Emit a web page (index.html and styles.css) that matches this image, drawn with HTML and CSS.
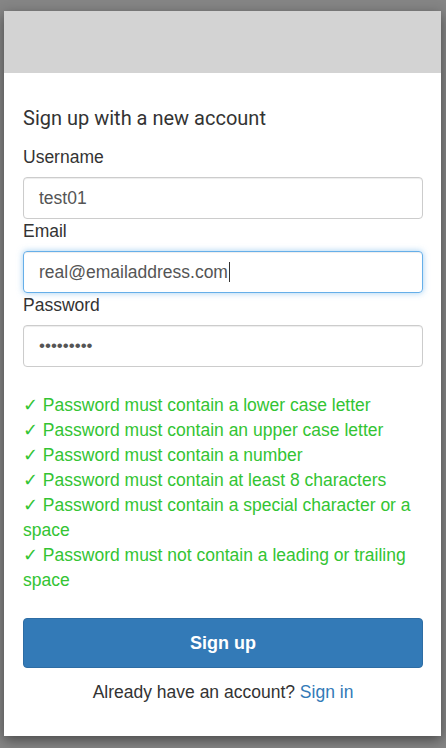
FILE: index.html
```html
<!DOCTYPE html>
<html>
<head>
<meta charset="utf-8">
<link rel="stylesheet" href="styles.css">
</head>
<body>
<div class="card">
  <div class="card-header"></div>
  <div class="card-body">
    <h1 class="title">Sign up with a new account</h1>
    <label class="label">Username</label>
    <div class="input">test01</div>
    <label class="label">Email</label>
    <div class="input focused">real@emailaddress.com<span class="caret"></span></div>
    <label class="label">Password</label>
    <div class="input dots">•••••••••</div>
    <ul class="checks">
      <li>✓ Password must contain a lower case letter</li>
      <li>✓ Password must contain an upper case letter</li>
      <li>✓ Password must contain a number</li>
      <li>✓ Password must contain at least 8 characters</li>
      <li>✓ Password must contain a special character or a space</li>
      <li>✓ Password must not contain a leading or trailing space</li>
    </ul>
    <button class="btn">Sign up</button>
    <p class="footer">Already have an account? <a class="link">Sign in</a></p>
  </div>
</div>
</body>
</html>
```
FILE: styles.css
```css
html, body {
  margin: 0;
  padding: 0;
  height: 100%;
}
body {
  background: #858585;
  padding: 11px 5px 0 4px;
  box-sizing: border-box;
  font-family: "Liberation Sans", Arial, sans-serif;
  color: #333;
}
.card {
  width: 437px;
  background: #fff;
  box-shadow: 0 4px 12px rgba(0,0,0,0.45);
}
.card-header {
  height: 62px;
  background: #d3d3d3;
}
.card-body {
  padding: 33px 18px 32px 19px;
  display: flex;
  flex-direction: column;
}
.title {
  margin: 0 0 15px;
  font-family: Roboto, "Liberation Sans", sans-serif;
  font-weight: 400;
  font-size: 20px;
  line-height: 24px;
  color: #333;
}
.label {
  display: block;
  font-size: 17.5px;
  line-height: 24px;
  margin-bottom: 8px;
  color: #333;
}
.input {
  height: 42px;
  box-sizing: border-box;
  border: 1px solid #ccc;
  border-radius: 4px;
  padding: 0 15px;
  display: flex;
  align-items: center;
  font-size: 17.5px;
  color: #555;
  box-shadow: inset 0 1px 1px rgba(0,0,0,0.075);
}
.input.focused {
  border-color: #66afe9;
  box-shadow: inset 0 1px 1px rgba(0,0,0,0.075), 0 0 6px rgba(102,175,233,0.6);
}
.caret {
  display: inline-block;
  width: 1px;
  height: 20px;
  background: #333;
  margin-left: 1px;
}
.input.dots {
  font-size: 17px;
  color: #555;
}
.checks {
  list-style: none;
  margin: 26px 0 0;
  padding: 0;
  color: #33c433;
  font-size: 17.5px;
  line-height: 25px;
}
.btn {
  margin-top: 25px;
  height: 50px;
  border: 1px solid #2e6da4;
  border-radius: 4px;
  background: #337ab7;
  color: #fff;
  font-family: "Liberation Sans", Arial, sans-serif;
  font-weight: 700;
  font-size: 18px;
}
.footer {
  margin: 12px 0 0;
  text-align: center;
  font-size: 17.5px;
  line-height: 24px;
  color: #333;
}
.link {
  color: #337ab7;
}
```
